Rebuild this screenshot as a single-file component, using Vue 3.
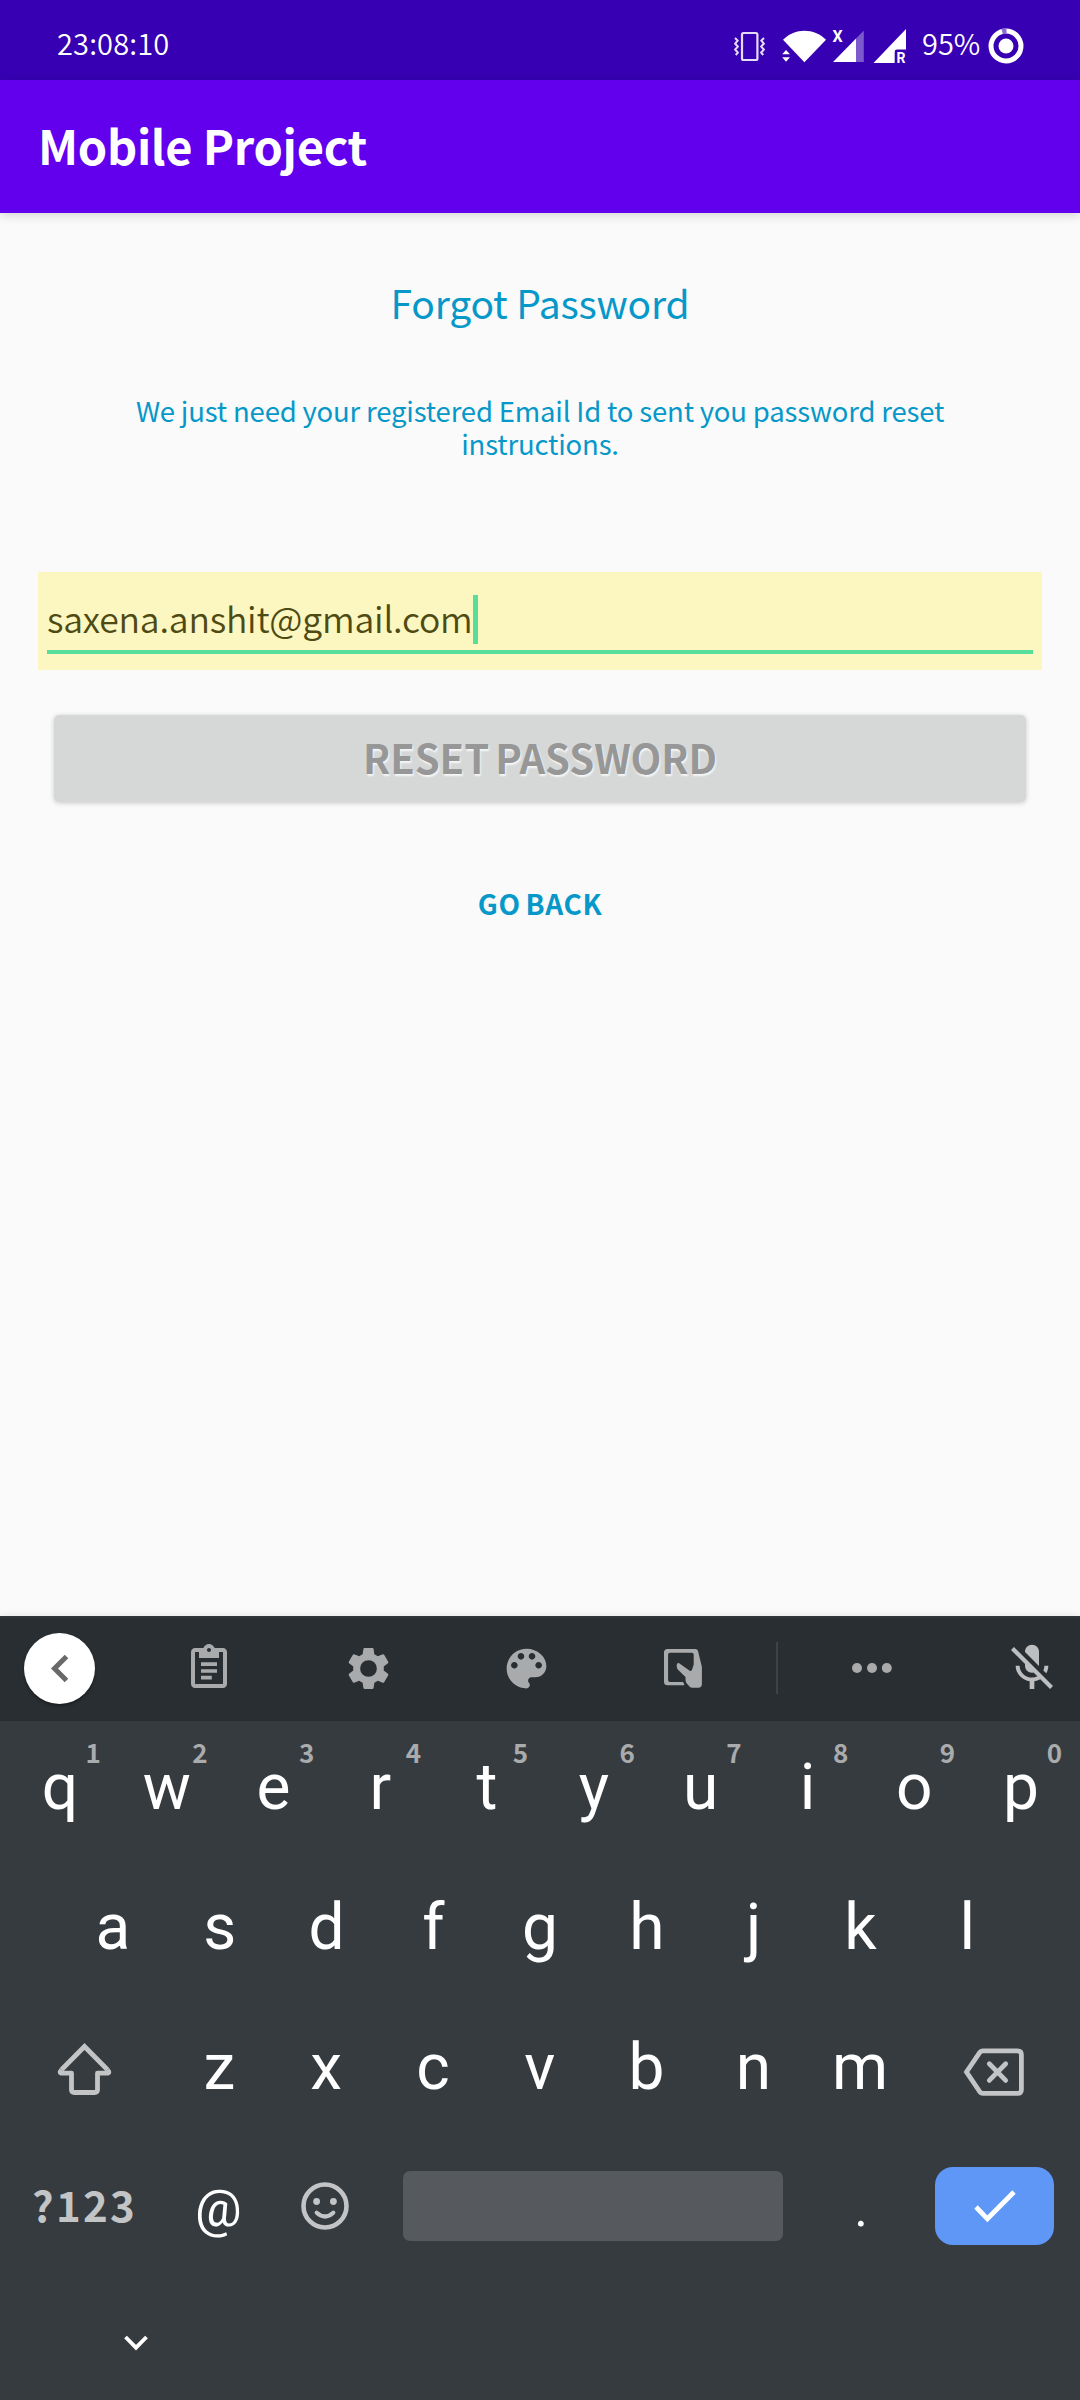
<script setup>
const topRow = 'qwertyuiop'.split('').map((letter, i) => ({ letter, hint: (i + 1) % 10 }))
const homeRow = 'asdfghjkl'.split('')
const bottomRow = 'zxcvbnm'.split('')
</script>

<template>
  <div class="screen">
    <header class="status">
      <span class="clock">23:08:10</span>
      <div class="status-icons">
        <svg class="vibrate" width="34" height="36" viewBox="733 28 34 36" fill="none" stroke="#e4dcf6">
          <rect x="742" y="33" width="15.4" height="27" rx="1.5" stroke-width="2.2" />
          <path d="M735 38l2.6 2.6-2.4 3 2.6 3-2.6 3 2.6 3-2 2.4M764 38l-2.6 2.6 2.4 3-2.6 3 2.6 3-2.6 3 2 2.4" stroke-width="2.1" />
        </svg>
        <svg class="wifi" width="46" height="36" viewBox="781 28 46 36" fill="#fff">
          <path d="M783 39.8C795 27.8 814 27.8 826 39.8L804.4 62.2z" />
          <path d="M782.2 54.2h7.8L786 50zM782.2 57.2h7.8l-4 4.6z" />
        </svg>
        <svg class="sim1" width="33" height="36" viewBox="832 28 33 36" fill="#fff">
          <path d="M833 62h23V38.6z" />
          <path d="M856 62h7.8V30.8L856 38.6z" opacity=".35" />
          <text x="832.5" y="42" class="mark x">X</text>
        </svg>
        <svg class="sim2" width="35" height="36" viewBox="872 28 35 36" fill="#fff">
          <path d="M873.5 63L906 29v20.5H897q-2.3 0-2.3 2.3V63z" />
          <text x="896.4" y="62.8" class="mark r">R</text>
        </svg>
        <span class="percent">95%</span>
        <svg class="battery" width="36" height="36" viewBox="987.5 28.5 36 36">
          <circle cx="1005.5" cy="46.5" r="15" fill="none" stroke="#fff" stroke-width="5" />
          <path d="M1001 29.6l5-.6v5.2l-3.7.5z" fill="#8c6bd2" />
          <circle cx="1005.5" cy="46.5" r="7.5" fill="#fff" />
        </svg>
      </div>
    </header>

    <div class="appbar"><h1>Mobile Project</h1></div>

    <main>
      <h2>Forgot Password</h2>
      <p class="lead">We just need your registered Email Id to sent you password reset instructions.</p>
      <div class="field">
        <div class="entry"><span class="email">saxena.anshit@gmail.com</span><i class="caret"></i></div>
      </div>
      <div class="reset"><span>RESET PASSWORD</span></div>
      <div class="back"><span>GO BACK</span></div>
    </main>

    <section class="keyboard">
      <div class="tools">
        <div class="tool start">
          <span class="collapse">
            <svg width="72" height="72" viewBox="24 1632 72 72"><path d="M66.5 1656.5L54.5 1668.5L66.5 1680.5" fill="none" stroke="#696969" stroke-width="5" /></svg>
          </span>
        </div>
        <div class="tool">
          <svg width="48" height="48" viewBox="0 0 24 24"><path d="M19 2h-4.18C14.4.84 13.3 0 12 0c-1.3 0-2.4.84-2.82 2H5c-1.1 0-2 .9-2 2v16c0 1.1.9 2 2 2h14c1.1 0 2-.9 2-2V4c0-1.1-.9-2-2-2zm-7 0c.55 0 1 .45 1 1s-.45 1-1 1-1-.45-1-1 .45-1 1-1zm7 18H5V4h2v3h10V4h2v16zM8 9.1h8v1.9H8zM8 12.6h8v1.8H8zM8 15.9h5.4v1.8H8z" /></svg>
        </div>
        <div class="tool">
          <svg width="49" height="49" viewBox="0 0 24 24"><path d="M19.43 12.98c.04-.32.07-.64.07-.98s-.03-.66-.07-.98l2.11-1.65c.19-.15.24-.42.12-.64l-2-3.46c-.12-.22-.39-.3-.61-.22l-2.49 1c-.52-.4-1.08-.73-1.69-.98l-.38-2.65C14.46 2.18 14.25 2 14 2h-4c-.25 0-.46.18-.49.42l-.38 2.65c-.61.25-1.17.59-1.69.98l-2.49-1c-.23-.09-.49 0-.61.22l-2 3.46c-.13.22-.07.49.12.64l2.11 1.65c-.04.32-.07.65-.07.98s.03.66.07.98l-2.11 1.65c-.19.15-.24.42-.12.64l2 3.46c.12.22.39.3.61.22l2.49-1c.52.4 1.08.73 1.69.98l.38 2.65c.03.24.24.42.49.42h4c.25 0 .46-.18.49-.42l.38-2.65c.61-.25 1.17-.59 1.69-.98l2.49 1c.23.09.49 0 .61-.22l2-3.46c.12-.22.07-.49-.12-.64l-2.11-1.65zM12 16.1a4.1 4.1 0 1 1 0-8.2 4.1 4.1 0 0 1 0 8.2z" /></svg>
        </div>
        <div class="tool">
          <svg width="53" height="53" viewBox="0 0 24 24"><path d="M12 3c-4.97 0-9 4.03-9 9s4.03 9 9 9c.83 0 1.5-.67 1.5-1.5 0-.39-.15-.74-.39-1.01-.23-.26-.38-.61-.38-.99 0-.83.67-1.5 1.5-1.5H16c2.76 0 5-2.24 5-5 0-4.42-4.03-8-9-8zm-5.5 9c-.83 0-1.5-.67-1.5-1.5S5.67 9 6.5 9 8 9.67 8 10.5 7.33 12 6.5 12zm3-4C8.67 8 8 7.33 8 6.5S8.67 5 9.5 5s1.5.67 1.5 1.5S10.33 8 9.5 8zm5 0c-.83 0-1.5-.67-1.5-1.5S13.67 5 14.5 5s1.5.67 1.5 1.5S15.33 8 14.5 8zm3 4c-.83 0-1.5-.67-1.5-1.5S16.67 9 17.5 9s1.5.67 1.5 1.5-.67 1.5-1.5 1.5z" /></svg>
        </div>
        <div class="tool">
          <svg width="38" height="39" viewBox="0 0 38 39"><path fill-rule="evenodd" d="M3.6 0H31q2.8 0 3.2 2.8L37.9 18V35q0 3.7-3.7 3.7H28.5Q26.5 38.7 25.2 37.2L22.6 34.2Q21.3 32.7 21.5 28L14 20.8Q12.7 19.5 12.7 17Q12.7 13.6 14.8 13.9L25 21.3Q27.3 22.8 28.1 20.5L29.7 15.5V5.5Q29.7 3.7 27.9 3.7H5.9Q4.1 3.7 4.1 5.5V31.2Q4.1 33 5.9 33H18.4Q20 33 20.2 36.3H3.6Q0 36.3 0 32.7V3.6Q0 0 3.6 0z" /></svg>
        </div>
        <div class="tool"><i class="divider"></i></div>
        <div class="tool dots">
          <svg width="40" height="12" viewBox="0 0 40 12"><circle cx="5" cy="6" r="5" /><circle cx="20" cy="6" r="5" /><circle cx="34.8" cy="6" r="5" /></svg>
        </div>
        <div class="tool mic">
          <svg width="56" height="56" viewBox="0 0 24 24"><path d="M19 11h-1.7c0 .74-.16 1.43-.43 2.05l1.23 1.23c.56-.98.9-2.09.9-3.28zm-4.02.17c0-.06.02-.11.02-.17V5c0-1.66-1.34-3-3-3S9 3.34 9 5v.18l5.98 5.99zM4.27 3L3 4.27l6.01 6.01V11c0 1.66 1.33 3 2.99 3 .22 0 .44-.03.65-.08l1.66 1.66c-.71.33-1.5.52-2.31.52-2.76 0-5.3-2.1-5.3-5.1H5c0 3.41 2.72 6.23 6 6.72V21h2v-3.28c.91-.13 1.77-.45 2.54-.9L19.73 21 21 19.73 4.27 3z" /></svg>
        </div>
      </div>

      <div class="row first">
        <div v-for="k in topRow" :key="k.letter" class="key">{{ k.letter }}<sup>{{ k.hint }}</sup></div>
      </div>
      <div class="row home">
        <div v-for="k in homeRow" :key="k" class="key">{{ k }}</div>
      </div>
      <div class="row">
        <div class="side shift">
          <svg width="60" height="60" viewBox="54 2040 60 60" fill="none" stroke="#c3c4c6" stroke-width="4.8" stroke-linejoin="round">
            <path stroke-linejoin="miter" d="M61.5 2069.7L84.5 2046.5L107.5 2069.7" />
            <path d="M107.5 2069.7Q110.5 2073.2 106.8 2073.2H97.5V2089.5Q97.5 2092.5 94.5 2092.5H74.5Q71.5 2092.5 71.5 2089.5V2073.2H62.2Q58.5 2073.2 61.5 2069.7" />
          </svg>
        </div>
        <div v-for="k in bottomRow" :key="k" class="key">{{ k }}</div>
        <div class="side erase">
          <svg width="66" height="54" viewBox="961 2045 66 54" fill="none" stroke="#c3c4c6" stroke-width="4.8">
            <path d="M983 2050.8H1017.5Q1021.4 2050.8 1021.4 2054.7V2089.5Q1021.4 2093.4 1017.5 2093.4H983Q980.8 2093.4 979.6 2091.5L966.5 2072L979.6 2052.7Q980.8 2050.8 983 2050.8z" />
            <path d="M989.3 2063.8L1005.7 2080.4M1005.7 2063.8L989.3 2080.4" stroke-linecap="round" />
          </svg>
        </div>
      </div>
      <div class="row last">
        <div class="symbols"><span>?123</span></div>
        <div class="key small">@</div>
        <div class="key">
          <svg class="emoji" width="50" height="50" viewBox="-25 -25 50 50">
            <circle r="21.5" fill="none" stroke="#c3c4c6" stroke-width="4.6" />
            <circle cx="-8.4" cy="-4.5" r="3.4" fill="#c3c4c6" /><circle cx="8.4" cy="-4.5" r="3.4" fill="#c3c4c6" />
            <path d="M-8.3 6.7Q0 14.2 8.3 6.7" fill="none" stroke="#c3c4c6" stroke-width="4.2" stroke-linecap="round" />
          </svg>
        </div>
        <div class="space"></div>
        <div class="key small">.</div>
        <div class="enter">
          <svg width="119" height="78" viewBox="935 2167 119 78"><path d="M976 2207L987.4 2218.8L1014 2192" fill="none" stroke="#fff" stroke-width="4.8" /></svg>
        </div>
      </div>
      <div class="navbar">
        <svg width="26" height="18" viewBox="0 0 26 18"><path d="M2.5 3L13 13.7L23.5 3" fill="none" stroke="#fff" stroke-width="3.8" /></svg>
      </div>
    </section>
  </div>
</template>

<style>
body {
  margin: 0;
}
</style>

<style scoped>
.screen {
  width: 1080px;
  height: 2400px;
  display: flex;
  flex-direction: column;
  overflow: hidden;
  background: #fafafa;
  font-family: "Noto Sans CJK SC", "Noto Sans", sans-serif;
}
svg {
  display: block;
  flex: none;
  overflow: visible;
}
.status {
  height: 80px;
  flex: none;
  box-sizing: border-box;
  padding: 0 56px 0 57px;
  display: flex;
  justify-content: space-between;
  background: #3700b3;
  color: #fff;
  font-size: 29px;
  font-weight: 350;
}
.clock,
.percent {
  line-height: 85px;
  white-space: nowrap;
}
.clock { letter-spacing: 0.15px; }
.status-icons {
  display: flex;
  align-items: flex-start;
  height: 80px;
}
.status-icons svg {
  margin-top: 28px;
}
.vibrate { margin-right: 14px; }
.wifi { margin-right: 5px; }
.sim1 { margin-right: 7px; }
.sim2 { margin-right: 15px; }
.percent { width: 66px; }
.mark {
  font-family: Roboto, sans-serif;
  font-weight: 700;
}
.mark.x { font-size: 16px; }
.mark.r { font-size: 14px; }
.appbar {
  height: 133px;
  flex: none;
  padding-left: 38px;
  background: #6200ee;
  color: #fff;
  box-shadow: 0 2px 10px rgba(0, 0, 0, 0.16);
}
h1 {
  margin: 0;
  font-size: 47px;
  line-height: 130px;
  font-weight: 700;
  letter-spacing: -0.3px;
}
main {
  flex: 1;
  display: flex;
  flex-direction: column;
  align-items: stretch;
  text-align: center;
  color: #0698c9;
}
h2 {
  margin: 64px 0 0;
  font-size: 39px;
  line-height: 50px;
  font-weight: 400;
  letter-spacing: -0.2px;
}
.lead {
  margin: 67px 110px 0;
  font-size: 27.5px;
  line-height: 33px;
  letter-spacing: -0.18px;
}
.field {
  height: 98px;
  box-sizing: border-box;
  margin: 112px 38px 0;
  padding: 20px 9px 0;
  background: #fcf6c0;
  color: #4e4a13;
}
.entry {
  display: flex;
  height: 58px;
  border-bottom: 4px solid #56de9a;
}
.email {
  font-size: 35.5px;
  line-height: 52px;
  font-weight: 350;
  letter-spacing: -0.2px;
  white-space: nowrap;
}
.caret {
  width: 5px;
  height: 49px;
  margin-top: 3px;
  background: #56de9a;
}
.reset {
  height: 87px;
  margin: 45px 54px 0;
  border-radius: 5px;
  background: #d6d8d7;
  color: #979797;
  font-size: 40px;
  line-height: 85px;
  font-weight: 700;
  letter-spacing: -0.05px;
  word-spacing: -3px;
  text-shadow: 1px 2px 2px rgba(255, 255, 255, 0.8);
  box-shadow: 0 1px 5px rgba(0, 0, 0, 0.2);
}
.back {
  margin-top: 81px;
  font-size: 28px;
  line-height: 40px;
  font-weight: 700;
  letter-spacing: 0.6px;
  word-spacing: -2px;
}
.keyboard {
  height: 784px;
  flex: none;
  background: #363b3f;
  box-shadow: 0 0 8px rgba(0, 0, 0, 0.1);
}
.tools {
  height: 105px;
  box-sizing: border-box;
  border-top: 2px solid #31363a;
  background: #292e32;
  display: grid;
  grid-template-columns: 120px 178px 140px 176px 138px 50px 138px 140px;
  fill: #a9aaac;
}
.tool {
  display: flex;
  align-items: center;
  justify-content: center;
  padding-bottom: 3px;
}
.start { padding-right: 1px; }
.dots { padding-left: 1px; }
.collapse {
  width: 71px;
  height: 71px;
  border-radius: 50%;
  background: #fff;
  display: flex;
  align-items: center;
  justify-content: center;
  box-shadow: 0 2px 3px rgba(0, 0, 0, 0.35);
}
.divider {
  width: 2px;
  height: 52px;
  background: #3e4347;
}
.mic {
  padding-left: 43px;
  fill: #bdbec0;
}
.row {
  height: 140px;
  padding: 0 6px;
  display: flex;
}
.row.first { padding-left: 6.5px; }
.home { padding: 0 59.5px; }
.key {
  width: 106.8px;
  flex: none;
  position: relative;
  display: flex;
  justify-content: center;
  color: #fff;
  font-family: Roboto, sans-serif;
  font-size: 64px;
  line-height: 134px;
}
sup {
  position: absolute;
  right: 12.5px;
  top: 9px;
  font-family: "Noto Sans CJK SC", "Noto Sans", sans-serif;
  font-size: 26px;
  line-height: 44px;
  font-weight: 700;
  color: #a9abad;
}
.side {
  width: 160px;
  flex: none;
}
.shift {
  box-sizing: border-box;
  padding: 39px 0 0 48px;
}
.erase {
  box-sizing: border-box;
  padding: 44px 0 0 47px;
}
.symbols {
  width: 159px;
  flex: none;
  color: #c3c4c6;
  font-size: 42px;
  line-height: 126px;
  font-weight: 700;
  text-indent: 26px;
  letter-spacing: 2.3px;
}
.small {
  font-size: 52px;
  line-height: 136px;
}
.emoji {
  margin-top: 40px;
}
.space {
  width: 380px;
  height: 70px;
  margin: 30px 25px 0 24px;
  border-radius: 7px;
  background: #56595e;
}
.enter {
  width: 119px;
  height: 78px;
  margin: 26px 0 0 21px;
  border-radius: 18px;
  background: #5f97f6;
}
.navbar {
  padding: 53px 0 0 123px;
}
</style>
